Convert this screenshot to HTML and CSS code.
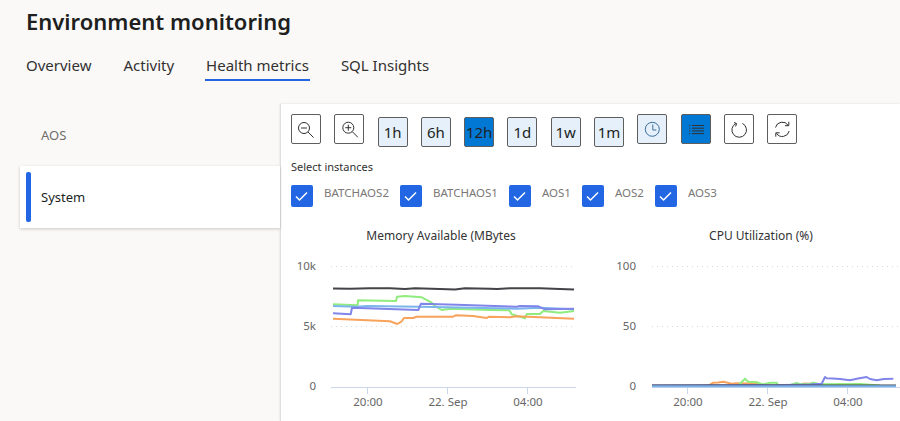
FILE: index.html
```
<!DOCTYPE html>
<html lang="en">
<head>
<meta charset="utf-8">
<title>Environment monitoring</title>
<link rel="stylesheet" href="styles.css">
</head>
<body>
<header class="page-head">
  <h1 class="title">Environment monitoring</h1>
  <nav class="tabs">
    <a class="tab">Overview</a>
    <a class="tab">Activity</a>
    <a class="tab tab-active">Health metrics</a>
    <a class="tab">SQL Insights</a>
  </nav>
</header>
<main class="main">
  <aside class="side">
    <div class="side-item">AOS</div>
    <div class="side-item side-active"><span class="side-bar"></span>System</div>
  </aside>
  <section class="panel">
    <div class="toolbar">
      <button class="btn"><svg class="ico" viewBox="0 0 30 30"><circle cx="13" cy="14" r="5.5"/><path d="M10 14h6M17 18l5.500 5.500"/></svg></button>
      <button class="btn"><svg class="ico" viewBox="0 0 30 30"><circle cx="14.300" cy="13.700" r="5.500"/><path d="M11.300 13.700h6M14.300 10.700v6M18.300 17.700l5.500 5.500"/></svg></button>
      <button class="btn btn-time">1h</button>
      <button class="btn btn-time">6h</button>
      <button class="btn btn-time btn-on">12h</button>
      <button class="btn btn-time">1d</button>
      <button class="btn btn-time">1w</button>
      <button class="btn btn-time">1m</button>
      <button class="btn btn-soft"><svg class="ico" viewBox="0 0 30 30"><circle cx="15.300" cy="15.300" r="7"/><path d="M15.800 10.500v5.500h3.500"/></svg></button>
      <button class="btn btn-on"><svg class="ico" viewBox="0 0 30 30"><path d="M11 11.500h12M11 14.200h12M11 16.900h12M11 19.600h12M8 11.500h1.200M8 14.200h1.200M8 16.900h1.200M8 19.600h1.200"/></svg></button>
      <button class="btn"><svg class="ico" viewBox="0 0 30 30"><path d="M12 9.400a7.300 7.300 0 1 0 6.400 0"/><path d="M10 8.500l2.600 1-1 3"/></svg></button>
      <button class="btn"><svg class="ico" viewBox="0 0 30 30"><path d="M8.500 13.500a7 7 0 0 1 12.600-2.300M22.200 17a7 7 0 0 1-12.700 2.300"/><path d="M21.800 7.800v3.900h-3.900M8.800 22.700v-3.900h3.900"/></svg></button>
    </div>
    <div class="select-label">Select instances</div>
    <div class="instances">
      <label class="inst"><span class="box"><svg viewBox="0 0 22 22"><path d="M5 11.500l3.500 3.500 7.500-7.500"/></svg></span>BATCHAOS2</label>
      <label class="inst"><span class="box"><svg viewBox="0 0 22 22"><path d="M5 11.500l3.500 3.500 7.500-7.500"/></svg></span>BATCHAOS1</label>
      <label class="inst"><span class="box"><svg viewBox="0 0 22 22"><path d="M5 11.500l3.500 3.500 7.500-7.500"/></svg></span>AOS1</label>
      <label class="inst"><span class="box"><svg viewBox="0 0 22 22"><path d="M5 11.500l3.500 3.500 7.500-7.500"/></svg></span>AOS2</label>
      <label class="inst"><span class="box"><svg viewBox="0 0 22 22"><path d="M5 11.500l3.500 3.500 7.500-7.500"/></svg></span>AOS3</label>
    </div>
    <div class="charts">
      <svg class="chart chart-a" viewBox="291 225 305 196">
        <text class="c-title" x="441" y="239">Memory Available (MBytes</text>
        <path class="grid" d="M331 265.500H576M331 325.500H576"/>
        <path class="axis" d="M331 386.500H576M367.500 386V393M447.500 386V393M527.500 386V393"/>
        <text class="c-y" x="316" y="269">10k</text>
        <text class="c-y" x="316" y="329">5k</text>
        <text class="c-y" x="316" y="389">0</text>
        <text class="c-x" x="368" y="405">20:00</text>
        <text class="c-x" x="448" y="405">22. Sep</text>
        <text class="c-x" x="528" y="405">04:00</text>
        <polyline class="s s-black" points="333,287.500 350,287.700 370,287.300 390,287.300 405,288 415,287.300 440,288 455,288.500 465,287.300 490,287.700 497,288 510,287.300 540,287.300 560,288 574,288.500"/>
        <polyline class="s s-green" points="333,303.300 357.700,304.300 358,299.300 396,300 397,295.700 405,295 421.700,296.300 431.700,301.700 435,305 441.700,309 450,307.700 490,309 509.300,309.300 511.700,313.300 525,317.300 526.700,313 540,313 543.300,310 560,311.700 574,310"/>
        <polyline class="s s-sky" points="333,305 356.700,305.700 366.700,305 420,305.700 516.700,307.700 540,306.700 574,308.300"/>
        <polyline class="s s-violet" points="333,312.300 350.700,313.300 352,306.700 418.300,309 421,302.700 456.700,303.700 516.700,305.700 520,305 538.300,305.300 545,308.300 574,307.700"/>
        <polyline class="s s-orange" points="333,317.700 390,320.300 397.300,323 401.700,320.300 404,317 413,317 416.700,315.700 453,315.700 455.700,314.300 473,315 486.700,317 489,315.700 510,316.300 516.700,315.300 574,317.700"/>
      </svg>
      <svg class="chart chart-b" viewBox="596 225 304 196">
        <text class="c-title" x="761" y="239">CPU Utilization (%)</text>
        <path class="grid" d="M652 265.500H900M652 325.500H900"/>
        <path class="axis" d="M652 386.500H900M687.500 386V393M767.500 386V393M847.500 386V393"/>
        <text class="c-y" x="636" y="269">100</text>
        <text class="c-y" x="636" y="329">50</text>
        <text class="c-y" x="636" y="389">0</text>
        <text class="c-x" x="688" y="405">20:00</text>
        <text class="c-x" x="768" y="405">22. Sep</text>
        <text class="c-x" x="848" y="405">04:00</text>
        <polyline class="s s-orange" points="707,384.500 710,383.700 713.300,381.700 718,381.500 723.300,380.700 731.700,382.700 736.700,382.300 756.700,382.700 760,384.500 800,384.500 804,382.500 815,383 820,384.500"/>
        <polyline class="s s-green" points="738,384.500 740,382.700 745,377.700 748,380.700 756.700,381.300 763,383.500 770,381.700 776.700,381.700 778,384 791,383.700 796.700,382 800,383.300 810,382.700 813,381.700 820,383.300 860,383 880,384.500"/>
        <polyline class="s s-violet" points="652,384.500 760,384 770,384.200 810,383.500 813,383.300 821.700,382.700 825,376 826.700,377.300 833,377.500 840,378 850,379.300 858,377.500 866.700,376 870,378 876.700,379.300 884,378 893.300,377.700"/>
        <polyline class="s s-black thin" points="652,384.200 896,384.200"/>
        <polyline class="s s-sky" points="652,385.200 896,385.200"/>
      </svg>
    </div>
  </section>
</main>
</body>
</html>
```
FILE: styles.css
```
* { box-sizing: border-box; }
html, body { height: 100%; }
body {
  margin: 0;
  height: 421px;
  overflow: hidden;
  background: #faf9f8;
  color: #201f1e;
  font-family: "Noto Sans", "Open Sans", sans-serif;
  display: flex;
  flex-direction: column;
}
.page-head { padding: 5px 0 0 26px; height: 104px; flex: none; }
.title {
  margin: 0;
  font-size: 22px;
  line-height: 33px;
  font-weight: 600;
}
.tabs { display: flex; gap: 32px; margin-top: 11px; }
.tab {
  position: relative;
  font-size: 15px;
  line-height: 32px;
  height: 34px;
  color: #323130;
}
.tab-active::after {
  content: "";
  position: absolute;
  left: -1px;
  right: -1px;
  top: 30px;
  height: 2px;
  background: #2266e3;
}
.main { display: flex; flex: 1; min-height: 0; }
.side { width: 280px; flex: none; padding: 0 0 0 20px; }
.side-item {
  height: 62px;
  display: flex;
  align-items: center;
  padding-left: 21px;
  font-size: 13px;
  color: #6f6d6b;
}
.side-active {
  position: relative;
  background: #fff;
  color: #201f1e;
  box-shadow: 0 1px 3px rgba(0, 0, 0, 0.2);
}
.side-bar {
  position: absolute;
  left: 6px;
  top: 6px;
  bottom: 6px;
  width: 5px;
  border-radius: 2px;
  background: #2266e3;
}
.panel {
  flex: 1;
  min-width: 0;
  background: #fff;
  border-left: 1px solid #e1dfdd;
  box-shadow: 0 0 2px rgba(0, 0, 0, 0.12);
  padding: 10px 0 0 10px;
  overflow: hidden;
}
.toolbar { display: flex; align-items: flex-start; gap: 13.290px; height: 39px; }
.btn {
  width: 30px;
  height: 30px;
  flex: none;
  padding: 0;
  border: 1px solid #605e5c;
  border-radius: 2px;
  background: #fff;
  color: #201f1e;
  font: 400 15px/1 "Noto Sans", sans-serif;
  display: flex;
  align-items: center;
  justify-content: center;
}
.btn-time { margin-top: 3px; background: #e5f0fa; }
.btn-soft { background: #e5f0fa; }
.btn-on { background: #0078d4; }
.ico { width: 30px; height: 30px; flex: none; fill: none; stroke: #323130; stroke-width: 1; margin: -1px; }
.btn-soft .ico { stroke: #3a6f9e; }
.select-label { font-size: 11px; line-height: 16px; margin-top: 6px; color: #323130; }
.instances { display: flex; margin-top: 10px; }
.inst {
  display: flex;
  align-items: flex-start;
  font-size: 11.500px;
  line-height: 16px;
  color: #7a7876;
  margin-right: 11px;
}
.box {
  width: 22px;
  height: 22px;
  margin-right: 11px;
  border-radius: 2px;
  background: #2266e3;
  flex: none;
}
.box svg { display: block; width: 22px; height: 22px; fill: none; stroke: #fff; stroke-width: 1.500; }
.charts { display: flex; margin-top: 19px; }
.chart { display: block; height: 196px; flex: none; }
.chart-a { width: 305px; }
.chart-b { width: 304px; }
.c-title { font: 400 12px "Noto Sans", sans-serif; fill: #333; text-anchor: middle; }
.c-y { font: 11.500px "Noto Sans", sans-serif; fill: #666; text-anchor: end; }
.c-x { font: 11.500px "Noto Sans", sans-serif; fill: #666; text-anchor: middle; }
.grid { fill: none; stroke: #d8d8d8; stroke-width: 1; stroke-dasharray: 1 4; }
.axis { fill: none; stroke: #ccd6eb; stroke-width: 1; }
.s { fill: none; stroke-width: 2; stroke-linejoin: round; }
.s-black { stroke: #434348; }
.thin { stroke-width: 1.500; }
.s-green { stroke: #90ed7d; }
.s-sky { stroke: #7cb5ec; }
.s-violet { stroke: #8085e9; }
.s-orange { stroke: #f7a35c; }
```
